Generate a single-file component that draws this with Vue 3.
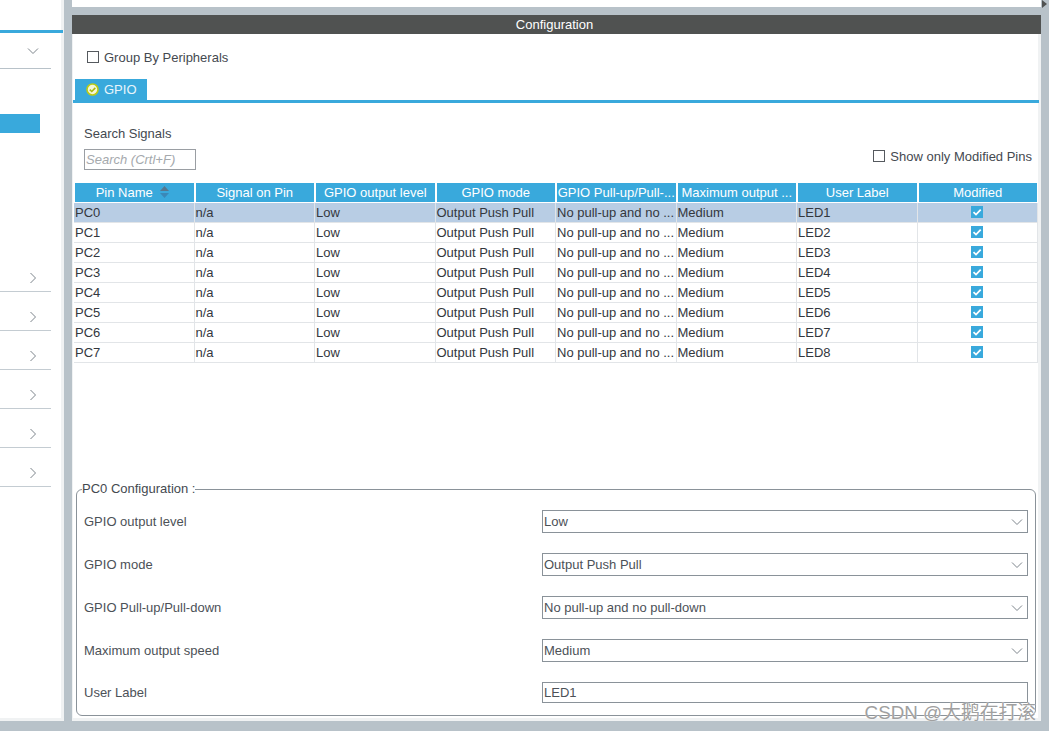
<script setup>
const columns = ['Pin Name', 'Signal on Pin', 'GPIO output level', 'GPIO mode', 'GPIO Pull-up/Pull-...', 'Maximum output ...', 'User Label', 'Modified']
const rows = [0, 1, 2, 3, 4, 5, 6, 7].map((n) => ({
  pin: `PC${n}`,
  cells: ['n/a', 'Low', 'Output Push Pull', 'No pull-up and no ...', 'Medium', `LED${n + 1}`],
}))
const sideItems = 6
const fields = [
  { label: 'GPIO output level', value: 'Low' },
  { label: 'GPIO mode', value: 'Output Push Pull' },
  { label: 'GPIO Pull-up/Pull-down', value: 'No pull-up and no pull-down' },
  { label: 'Maximum output speed', value: 'Medium' },
]
</script>

<template>
  <div class="page">
    <div class="main">
      <aside class="sidebar">
        <div class="side-top"></div>
        <div class="side-head">
          <svg class="chev" width="12" height="12" viewBox="0 0 12 12"><path d="M1 3.5 6 8.5 11 3.5" /></svg>
        </div>
        <div class="side-selected"></div>
        <div class="side-list">
          <div v-for="n in sideItems" :key="n" class="side-item">
            <svg class="chev" width="12" height="12" viewBox="0 0 12 12"><path d="M3.5 1 8.5 6 3.5 11" /></svg>
          </div>
        </div>
      </aside>

      <section class="content">
        <div class="strip"></div>
        <div class="title">Configuration</div>
        <div class="panel">
          <label class="group-by"><span class="box"></span><span class="group-text">Group By Peripherals</span></label>
          <div class="tabs">
            <div class="tab">
              <svg width="13" height="13" viewBox="0 0 13 13">
                <circle cx="6.5" cy="6.5" r="5.5" fill="#f4f6d8" stroke="#bccb12" stroke-width="1.6" />
                <path d="M3.8 6.6 5.8 8.5 9.3 4.9" fill="none" stroke="#a9b80f" stroke-width="1.6" />
              </svg>
              GPIO
            </div>
          </div>
          <div class="search-row">
            <div class="search-col">
              <div class="search-label">Search Signals</div>
              <div class="search-input">Search (Crtl+F)</div>
            </div>
            <label class="show-only"><span class="box"></span>Show only Modified Pins</label>
          </div>

          <div class="table">
            <div class="tr head">
              <div v-for="(c, i) in columns" :key="c" class="th" :class="{ sorted: i === 0 }">
                {{ c }}
                <svg v-if="i === 0" class="sort" width="9" height="12" viewBox="0 0 9 12">
                  <path d="M4.5 0 9 5H0Z" fill="#55778f" />
                  <path d="M0 7H9L4.5 12Z" fill="#3a88b8" />
                </svg>
              </div>
            </div>
            <div v-for="(r, ri) in rows" :key="r.pin" class="tr" :class="{ selected: ri === 0 }">
              <div class="td">{{ r.pin }}</div>
              <div v-for="(v, vi) in r.cells" :key="vi" class="td">{{ v }}</div>
              <div class="td center">
                <span class="tick">
                  <svg width="12" height="12" viewBox="0 0 12 12"><path d="M2.5 6.2 5 8.6 9.7 3.6" fill="none" stroke="#fff" stroke-width="1.7" /></svg>
                </span>
              </div>
            </div>
          </div>

          <fieldset class="config">
            <legend>PC0 Configuration :</legend>
            <div v-for="f in fields" :key="f.label" class="field">
              <div class="field-label">{{ f.label }}</div>
              <div class="select">
                {{ f.value }}
                <svg class="chev" width="12" height="8" viewBox="0 0 12 8"><path d="M1 1.5 6 6.5 11 1.5" /></svg>
              </div>
            </div>
            <div class="field last">
              <div class="field-label">User Label</div>
              <div class="select text">LED1</div>
            </div>
          </fieldset>
        </div>
      </section>
      <div class="corner"></div>
    </div>
    <div class="watermark">CSDN @大鹅在打滚</div>
  </div>
</template>

<style>
body { margin: 0; background: #fff; }
</style>

<style scoped>
.page {
  position: relative;
  width: 1051px;
  height: 732px;
  overflow: hidden;
  background: #fff;
  font-family: "Liberation Sans", Arial, sans-serif;
  font-size: 13px;
  color: #444950;
}
.main {
  position: relative;
  display: flex;
  width: 1049px;
  height: 731px;
  padding-bottom: 10px;
  box-sizing: border-box;
  background: #b8c2c9;
}
.sidebar {
  width: 64px;
  margin-right: 8px;
  box-sizing: border-box;
  background: #fff;
  border-right: 3px solid #f0f2f3;
  border-bottom: 3px solid #f0f2f3;
}
.side-top {
  height: 30px;
  margin-right: -2px;
  border-bottom: 3px solid #39a9dc;
}
.side-head {
  display: flex;
  align-items: center;
  justify-content: flex-end;
  width: 51px;
  height: 36px;
  padding-right: 12px;
  box-sizing: border-box;
  border-bottom: 1px solid #b8c2c9;
}
.side-selected {
  width: 40px;
  height: 19px;
  margin-top: 45px;
  background: #39a9dc;
}
.side-list { margin-top: 120px; }
.side-item {
  display: flex;
  align-items: flex-end;
  justify-content: flex-end;
  width: 51px;
  height: 39px;
  padding-right: 12px;
  padding-bottom: 7px;
  box-sizing: border-box;
  border-bottom: 1px solid #c4ccd2;
}
.chev path { fill: none; stroke: #7d858c; stroke-width: 1; }
.content {
  display: flex;
  flex-direction: column;
  width: 969px;
  min-width: 0;
}
.strip {
  flex: none;
  height: 7px;
  margin-bottom: 8px;
  background: #fff;
}
.title {
  flex: none;
  height: 19px;
  padding-right: 4px;
  line-height: 19px;
  text-align: center;
  color: #fff;
  background: #505251;
}
.panel {
  flex: 1;
  min-height: 0;
  padding-left: 1px;
  box-sizing: border-box;
  background: #fff;
  border-right: 3px solid #f0f2f3;
  border-bottom: 3px solid #f0f2f3;
  border-left: 1px solid #f0f2f3;
}
.box {
  display: inline-block;
  flex: none;
  width: 10px;
  height: 10px;
  border: 1px solid #55595e;
  background: #fff;
}
.group-by {
  display: flex;
  align-items: center;
  gap: 5px;
  height: 45px;
  padding-left: 13px;
}
.group-text { padding-top: 2px; }
.tabs {
  height: 21px;
  margin-right: -1px;
  margin-left: -1px;
  padding-left: 2px;
  border-bottom: 3px solid #39a9dc;
}
.tab {
  display: flex;
  align-items: center;
  gap: 5px;
  width: 72px;
  height: 21px;
  padding-left: 11px;
  box-sizing: border-box;
  color: #e8f5fb;
  background: #39a9dc;
}
.search-row {
  display: flex;
  justify-content: space-between;
  align-items: flex-end;
  height: 67px;
  padding: 0 6px 0 10px;
}
.search-label { margin-bottom: 8px; line-height: 15px; height: 15px; padding-top: 1px; box-sizing: content-box; }
.search-input {
  width: 112px;
  height: 21px;
  padding-left: 1px;
  box-sizing: border-box;
  line-height: 19px;
  border: 1px solid #9a9ea3;
  font-style: italic;
  color: #a5a9ad;
  white-space: nowrap;
}
.show-only {
  display: flex;
  align-items: center;
  gap: 5px;
  height: 14px;
  margin-bottom: 7px;
}
.table {
  width: 964px;
  margin-top: 13px;
}
.tr {
  display: grid;
  grid-template-columns: repeat(8, 1fr);
  height: 20px;
  line-height: 19px;
  color: #33373d;
}
.tr.head { color: #fff; }
.th {
  position: relative;
  margin-left: 1px;
  margin-right: 1px;
  height: 19px;
  box-sizing: border-box;
  text-align: center;
  white-space: nowrap;
  overflow: hidden;
  background: #39a9dc;
}
.th.sorted { padding-right: 20px; }
.sort { position: absolute; left: 85px; top: 3px; }
.td {
  height: 20px;
  padding-left: 1px;
  box-sizing: border-box;
  white-space: nowrap;
  overflow: hidden;
  border-right: 1px solid #e2e5e8;
  border-bottom: 1px solid #e2e5e8;
}
.selected { background: #b8cde4; }
.center {
  display: flex;
  align-items: center;
  justify-content: center;
  padding-right: 2px;
  padding-bottom: 1px;
}
.tick {
  display: flex;
  align-items: center;
  justify-content: center;
  width: 12px;
  height: 12px;
  background: #39a9dc;
}
.config {
  width: 960px;
  height: 234px;
  margin: 119px 0 0 2px;
  padding: 0 7px;
  box-sizing: border-box;
  border: 1px solid #8a9299;
  border-radius: 6px;
}
legend {
  padding: 0;
  margin-left: -2px;
  line-height: 14px;
}
.field {
  display: flex;
  align-items: center;
  justify-content: space-between;
  height: 23px;
  margin-top: 20px;
  color: #4c5157;
}
.field:nth-of-type(1) { margin-top: 14px; }
.field.last { height: 21px; margin-top: 20px; }
.select {
  position: relative;
  width: 486px;
  height: 23px;
  padding-left: 1px;
  box-sizing: border-box;
  line-height: 22px;
  border: 1px solid #8a9299;
  background: #fff;
}
.select .chev { position: absolute; right: 4px; top: 7px; }
.select.text { height: 21px; line-height: 19px; }
.corner {
  position: absolute;
  top: 0;
  left: 1042px;
  width: 0;
  height: 0;
  border-left: 5px solid #505251;
  border-top: 4px solid transparent;
  border-bottom: 4px solid transparent;
}
.watermark {
  position: absolute;
  right: 15px;
  top: 702px;
  font-family: "Liberation Sans", "Noto Sans CJK SC", sans-serif;
  font-size: 18.8px;
  line-height: 22px;
  color: #a0a0a0;
  text-shadow: 0 0 1px #fff;
}
</style>
